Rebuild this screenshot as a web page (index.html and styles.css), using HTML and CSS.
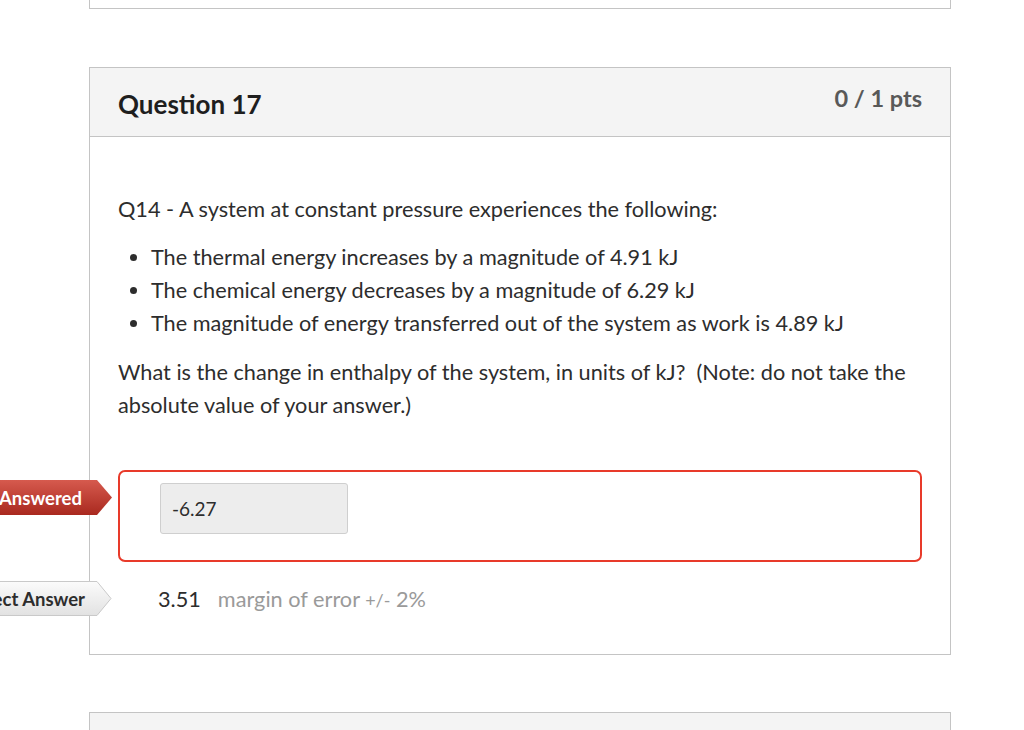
FILE: index.html
```html
<!DOCTYPE html>
<html lang="en">
<head>
<meta charset="utf-8">
<title>Question 17</title>
<link rel="stylesheet" href="styles.css">
</head>
<body>
<div class="page">
  <div class="prev-card"></div>

  <div class="card">
    <div class="card-header">
      <h2 class="q-name">Question 17</h2>
      <div class="q-pts">0 / 1 pts</div>
    </div>
    <div class="card-body">
      <p class="q-text">Q14 - A system at constant pressure experiences the following:</p>
      <ul class="q-list">
        <li>The thermal energy increases by a magnitude of 4.91 kJ</li>
        <li>The chemical energy decreases by a magnitude of 6.29 kJ</li>
        <li>The magnitude of energy transferred out of the system as work is 4.89 kJ</li>
      </ul>
      <p class="q-text">What is the change in enthalpy of the system, in units of kJ?&nbsp; (Note: do not take the absolute value of your answer.)</p>

      <div class="answer-row">
        <div class="tag tag-red">
          <svg class="tag-bg" viewBox="0 0 200 35" preserveAspectRatio="none" aria-hidden="true">
            <defs>
              <linearGradient id="gr" x1="0" y1="0" x2="0" y2="1">
                <stop offset="0" stop-color="#d65a4e"/>
                <stop offset="1" stop-color="#a9291f"/>
              </linearGradient>
            </defs>
            <polygon points="0,0 185,0 200,17.5 185,35 0,35" fill="url(#gr)"/>
          </svg>
          <span class="tag-label">You Answered</span>
        </div>
        <div class="answer-box">
          <div class="answer-input">-6.27</div>
        </div>
      </div>

      <div class="answer-row correct-row">
        <div class="tag tag-gray">
          <svg class="tag-bg" viewBox="0 0 200 35" preserveAspectRatio="none" aria-hidden="true">
            <defs>
              <linearGradient id="gg" x1="0" y1="0" x2="0" y2="1">
                <stop offset="0" stop-color="#fbfbfb"/>
                <stop offset="1" stop-color="#e2e2e2"/>
              </linearGradient>
            </defs>
            <polygon points="0,0.5 185,0.5 199,17.5 185,34.5 0,34.5" fill="url(#gg)" stroke="#c9c9c9" stroke-width="1"/>
          </svg>
          <span class="tag-label">Correct Answer</span>
        </div>
        <div class="correct-answer">
          <span class="correct-value">3.51</span>
          <span class="margin">margin of error <span class="pm">+/-</span> 2%</span>
        </div>
      </div>
    </div>
  </div>

  <div class="next-card"></div>
</div>
</body>
</html>
```

FILE: styles.css
```css
html, body {
  margin: 0;
  padding: 0;
  background: #ffffff;
}

body {
  font-family: Lato, "Open Sans", "Liberation Sans", sans-serif;
  color: #2d2d2d;
  overflow: hidden;
  height: 730px;
}

.page {
  margin-left: 89px;
  width: 862px;
}

.prev-card {
  height: 8px;
  border: 1px solid #c4c4c4;
  border-top: none;
  margin-bottom: 58px;
}

.card {
  border: 1px solid #c4c4c4;
  position: relative;
}

.card-header {
  height: 68px;
  background: #f4f4f4;
  border-bottom: 1px solid #c4c4c4;
  display: flex;
  justify-content: space-between;
  align-items: center;
  padding: 0 28px;
}

.q-name {
  margin: 4px 0 0 0;
  font-size: 26px;
  font-weight: 700;
  color: #1e1e1e;
}

.q-pts {
  margin-bottom: 8px;
  font-size: 23.5px;
  font-weight: 700;
  color: #595959;
}

.card-body {
  padding: 56px 28px 0 28px;
  height: 461px;
}

.q-text {
  margin: 0 0 15px 0;
  font-size: 21.7px;
  line-height: 33px;
}

.q-list {
  margin: 0 0 16px 0;
  padding-left: 33px;
  font-size: 21.7px;
  line-height: 33px;
}

.answer-row {
  position: relative;
  margin-top: 48px;
}

.answer-box {
  border: 2px solid #e83a2a;
  border-radius: 7px;
  padding: 11px 0 0 40px;
  box-sizing: border-box;
  height: 92px;
}

.answer-input {
  width: 188px;
  height: 51px;
  box-sizing: border-box;
  background: #ededed;
  border: 1px solid #cfcfcf;
  border-radius: 3px;
  padding-left: 11px;
  display: flex;
  align-items: center;
  font-size: 19px;
  color: #2d2d2d;
}

.tag {
  position: absolute;
  left: -206px;
  width: 200px;
  height: 35px;
  display: flex;
  align-items: center;
  justify-content: flex-end;
  padding-right: 30px;
  box-sizing: border-box;
}

.tag-red {
  top: 10px;
}

.tag-gray {
  top: 0px;
}

.tag-bg {
  position: absolute;
  left: 0;
  top: 0;
  width: 200px;
  height: 35px;
}

.tag-label {
  position: relative;
  font-size: 18.5px;
  font-weight: 700;
  white-space: nowrap;
}

.tag-red .tag-label {
  color: #ffffff;
}

.tag-gray .tag-label {
  color: #2d2d2d;
  margin-right: -3px;
}

.correct-row {
  margin-top: 19px;
}

.correct-answer {
  height: 36px;
  display: flex;
  align-items: center;
  padding-left: 40px;
  font-size: 21.7px;
}

.correct-value {
  color: #2d2d2d;
  margin-right: 17px;
}

.margin {
  color: #9a9a9a;
}

.pm {
  font-size: 18px;
}

.next-card {
  margin-top: 57px;
  height: 40px;
  background: #f4f4f4;
  border: 1px solid #c4c4c4;
}
```
